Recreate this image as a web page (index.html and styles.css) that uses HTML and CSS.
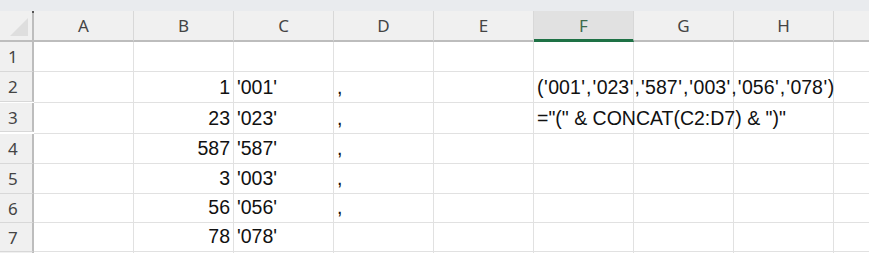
FILE: index.html
```html
<!DOCTYPE html>
<html>
<head>
<meta charset="utf-8">
<link rel="stylesheet" href="styles.css">
</head>
<body>
<div class="topstrip"></div>
<div class="sheet">
  <div class="hdr corner"><svg class="tri" width="20" height="20" viewBox="0 0 20 20"><polygon points="19,1 19,19 1,19" fill="#dedede"/></svg><span class="dot"></span></div>
  <div class="hdr col">A</div>
  <div class="hdr col">B</div>
  <div class="hdr col">C</div>
  <div class="hdr col">D</div>
  <div class="hdr col">E</div>
  <div class="hdr col sel">F</div>
  <div class="hdr col">G</div>
  <div class="hdr col">H</div>
  <div class="hdr col last"></div>

  <div class="rh r30">1</div>
  <div class="c"></div><div class="c"></div><div class="c"></div><div class="c"></div><div class="c"></div><div class="c"></div><div class="c"></div><div class="c"></div><div class="c last"></div>

  <div class="rh r30">2</div>
  <div class="c"></div><div class="c num">1</div><div class="c">'001'</div><div class="c">,</div><div class="c"></div><div class="c over">(<span class="p">'</span>001<span class="p">'</span><span class="p">,</span><span class="p">'</span>023<span class="p">'</span><span class="p">,</span><span class="p">'</span>587<span class="p">'</span><span class="p">,</span><span class="p">'</span>003<span class="p">'</span><span class="p">,</span><span class="p">'</span>056<span class="p">'</span><span class="p">,</span><span class="p">'</span>078<span class="p">'</span>)</div><div class="c"></div><div class="c"></div><div class="c last"></div>

  <div class="rh r29">3</div>
  <div class="c"></div><div class="c num">23</div><div class="c">'023'</div><div class="c">,</div><div class="c"></div><div class="c over">="(" &amp; CONCAT(C2:D7) &amp; ")"</div><div class="c"></div><div class="c"></div><div class="c last"></div>

  <div class="rh r30">4</div>
  <div class="c"></div><div class="c num">587</div><div class="c">'587'</div><div class="c">,</div><div class="c"></div><div class="c"></div><div class="c"></div><div class="c"></div><div class="c last"></div>

  <div class="rh r30">5</div>
  <div class="c"></div><div class="c num">3</div><div class="c">'003'</div><div class="c">,</div><div class="c"></div><div class="c"></div><div class="c"></div><div class="c"></div><div class="c last"></div>

  <div class="rh r29">6</div>
  <div class="c"></div><div class="c num">56</div><div class="c">'056'</div><div class="c">,</div><div class="c"></div><div class="c"></div><div class="c"></div><div class="c"></div><div class="c last"></div>

  <div class="rh r29">7</div>
  <div class="c"></div><div class="c num">78</div><div class="c">'078'</div><div class="c"></div><div class="c"></div><div class="c"></div><div class="c"></div><div class="c"></div><div class="c last"></div>

  <div class="rh r29"></div>
  <div class="c"></div><div class="c"></div><div class="c"></div><div class="c"></div><div class="c"></div><div class="c"></div><div class="c"></div><div class="c"></div><div class="c last"></div>
</div>
</body>
</html>
```
FILE: styles.css
```css
html, body {
  margin: 0;
  padding: 0;
  background: #ffffff;
  overflow: hidden;
  height: 253px;
}
.topstrip {
  height: 11px;
  background: #e9ebee;
}
.sheet {
  display: grid;
  grid-template-columns: 34px repeat(8, 100px) 35px;
  grid-auto-rows: auto;
}
.hdr {
  box-sizing: border-box;
  height: 31px;
  background: #f0f0f0;
  border-bottom: 2px solid #bdbdbd;
  font-family: "Noto Sans", "Open Sans", sans-serif;
  font-size: 17px;
  color: #444444;
  display: flex;
  align-items: center;
  justify-content: center;
  position: relative;
}
.col {
  border-right: 1px solid #d8d8d8;
}
.col.last { border-right: none; }
.col.sel {
  background: #e1e1e1;
  color: #3b6a4c;
  border-bottom: 3px solid #1e7145;
}
.corner {
  border-right: 2px solid #bdbdbd;
}
.tri {
  position: absolute;
  left: 9px;
  top: 6px;
}
.dot {
  position: absolute;
  right: -2px;
  top: 0;
  width: 2px;
  height: 2px;
  background: #555;
}
.rh {
  box-sizing: border-box;
  background: #f0f0f0;
  border-right: 2px solid #bdbdbd;
  border-bottom: 1px solid #d8d8d8;
  font-family: "Noto Sans", "Open Sans", sans-serif;
  font-size: 17px;
  color: #444444;
  display: flex;
  align-items: center;
  padding-left: 8px;
}
.r30 { height: 30px; }
.r29 { height: 29px; }
.c {
  box-sizing: border-box;
  border-right: 1px solid #e1e1e1;
  border-bottom: 1px solid #e1e1e1;
  font-family: "Liberation Sans", Arial, sans-serif;
  font-size: 19.5px;
  color: #111111;
  display: flex;
  align-items: flex-end;
  padding: 0 3px 3px 3px;
  white-space: nowrap;
  min-width: 0;
}
.c.last { border-right: none; }
.num { justify-content: flex-end; }
.over { overflow: visible; position: relative; z-index: 1; display: block; padding-top: 4px; }
.p { padding: 0 0.5px; }
```
